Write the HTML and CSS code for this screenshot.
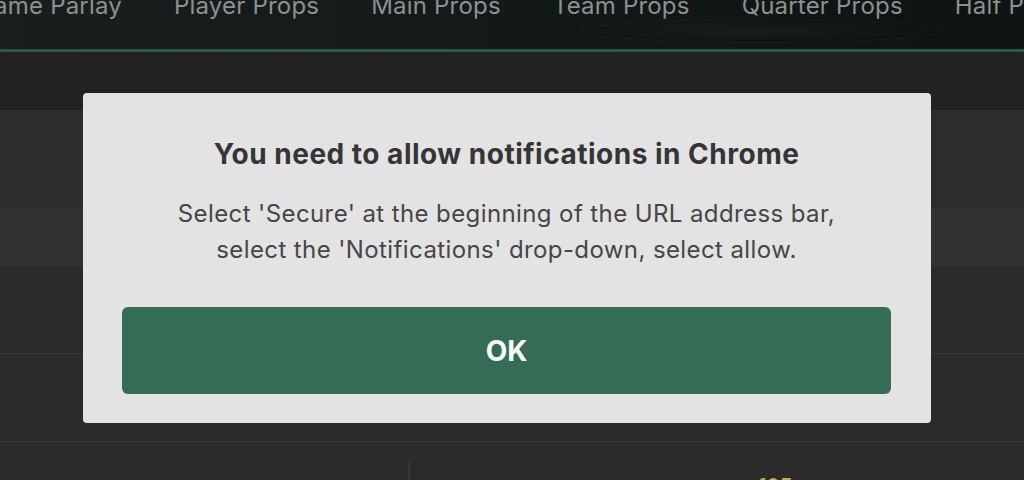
FILE: index.html
```html
<!DOCTYPE html>
<html lang="en">
<head>
  <meta charset="UTF-8">
  <title>Props</title>
  <link rel="stylesheet" href="styles.css">
</head>
<body>

  <nav class="tabs">
    <div class="tab-row">
      <span class="tab first">Same Game Parlay</span>
      <span class="tab">Player Props</span>
      <span class="tab">Main Props</span>
      <span class="tab">Team Props</span>
      <span class="tab active">Quarter Props</span>
      <span class="tab">Half Props</span>
    </div>
  </nav>

  <div class="content">
    <div class="row top"></div>
    <div class="row game"></div>
    <div class="row band"></div>
    <div class="row line"></div>
    <div class="row line"></div>
    <div class="row odds">
      <span class="divider"></span>
      <span class="price">105</span>
    </div>
  </div>

  <div class="modal">
    <h2 class="modal-title">You need to allow notifications in Chrome</h2>
    <p class="modal-text">
      Select 'Secure' at the beginning of the URL address bar,<br>
      select the 'Notifications' drop-down, select allow.
    </p>
    <button class="ok-btn">OK</button>
  </div>

</body>
</html>
```

FILE: styles.css
```css
body {
  margin: 0;
  background: #222222;
  font-family: Inter, 'Noto Sans', sans-serif;
  overflow: hidden;
  height: 480px;
  position: relative;
}

.tabs {
  height: 49px;
  overflow: hidden;
  background: linear-gradient(to right, #1a1f1e, #121817 60%, #0e1313);
  border-bottom: 3px solid #2f5849;
  position: relative;
}

.tab-row {
  display: flex;
  gap: 52px;
  margin-top: -9px;
  padding-left: 122px;
  white-space: nowrap;
}

.tab {
  font-size: 24px;
  letter-spacing: 0.2px;
  color: #8b9290;
}

/* first tab is cut by the left edge: its text ends at the row start */
.tab.first {
  width: 0;
  display: flex;
  justify-content: flex-end;
}

.tab.active {
  position: relative;
}

.tab.active::after {
  content: "";
  position: absolute;
  left: -160px;
  right: -40px;
  top: 28px;
  height: 22px;
  border-radius: 50%;
  border: 1px solid rgba(120, 140, 135, 0.08);
  background: radial-gradient(ellipse, rgba(60, 80, 75, 0.12), transparent 70%);
}

.content {
  display: flex;
  flex-direction: column;
}

.row {
  background: #2a2b2b;
}

.row.top {
  height: 58px;
  background: #222222;
}

.row.game {
  height: 98px;
  background: #2a2d2c;
}

.row.band {
  height: 58px;
  background: #313232;
}

.row.line {
  height: 87px;
  border-bottom: 1px solid #363737;
}

.row.odds {
  height: 60px;
  position: relative;
}

.divider {
  position: absolute;
  left: 408px;
  top: 20px;
  width: 2px;
  height: 40px;
  background: #353636;
}

.price {
  position: absolute;
  left: 758px;
  top: 32px;
  font-size: 20px;
  font-weight: 600;
  color: #c9a93a;
}

.modal {
  position: absolute;
  top: 93px;
  left: 83px;
  width: 848px;
  box-sizing: border-box;
  padding: 38px 40px 29px 39px;
  background: #e3e3e3;
  border-radius: 4px;
  text-align: center;
}

.modal-title {
  margin: 0;
  font-size: 28px;
  letter-spacing: 0.5px;
  font-weight: 700;
  color: #353535;
  line-height: 46px;
}

.modal-text {
  margin: 19px 0 39px;
  font-size: 24px;
  letter-spacing: 0.4px;
  line-height: 36px;
  color: #464646;
}

.ok-btn {
  display: block;
  width: 100%;
  height: 87px;
  border: none;
  border-radius: 6px;
  background: #356d54;
  color: #ffffff;
  font-family: Inter, 'Noto Sans', sans-serif;
  font-size: 28px;
  font-weight: 700;
}
```
